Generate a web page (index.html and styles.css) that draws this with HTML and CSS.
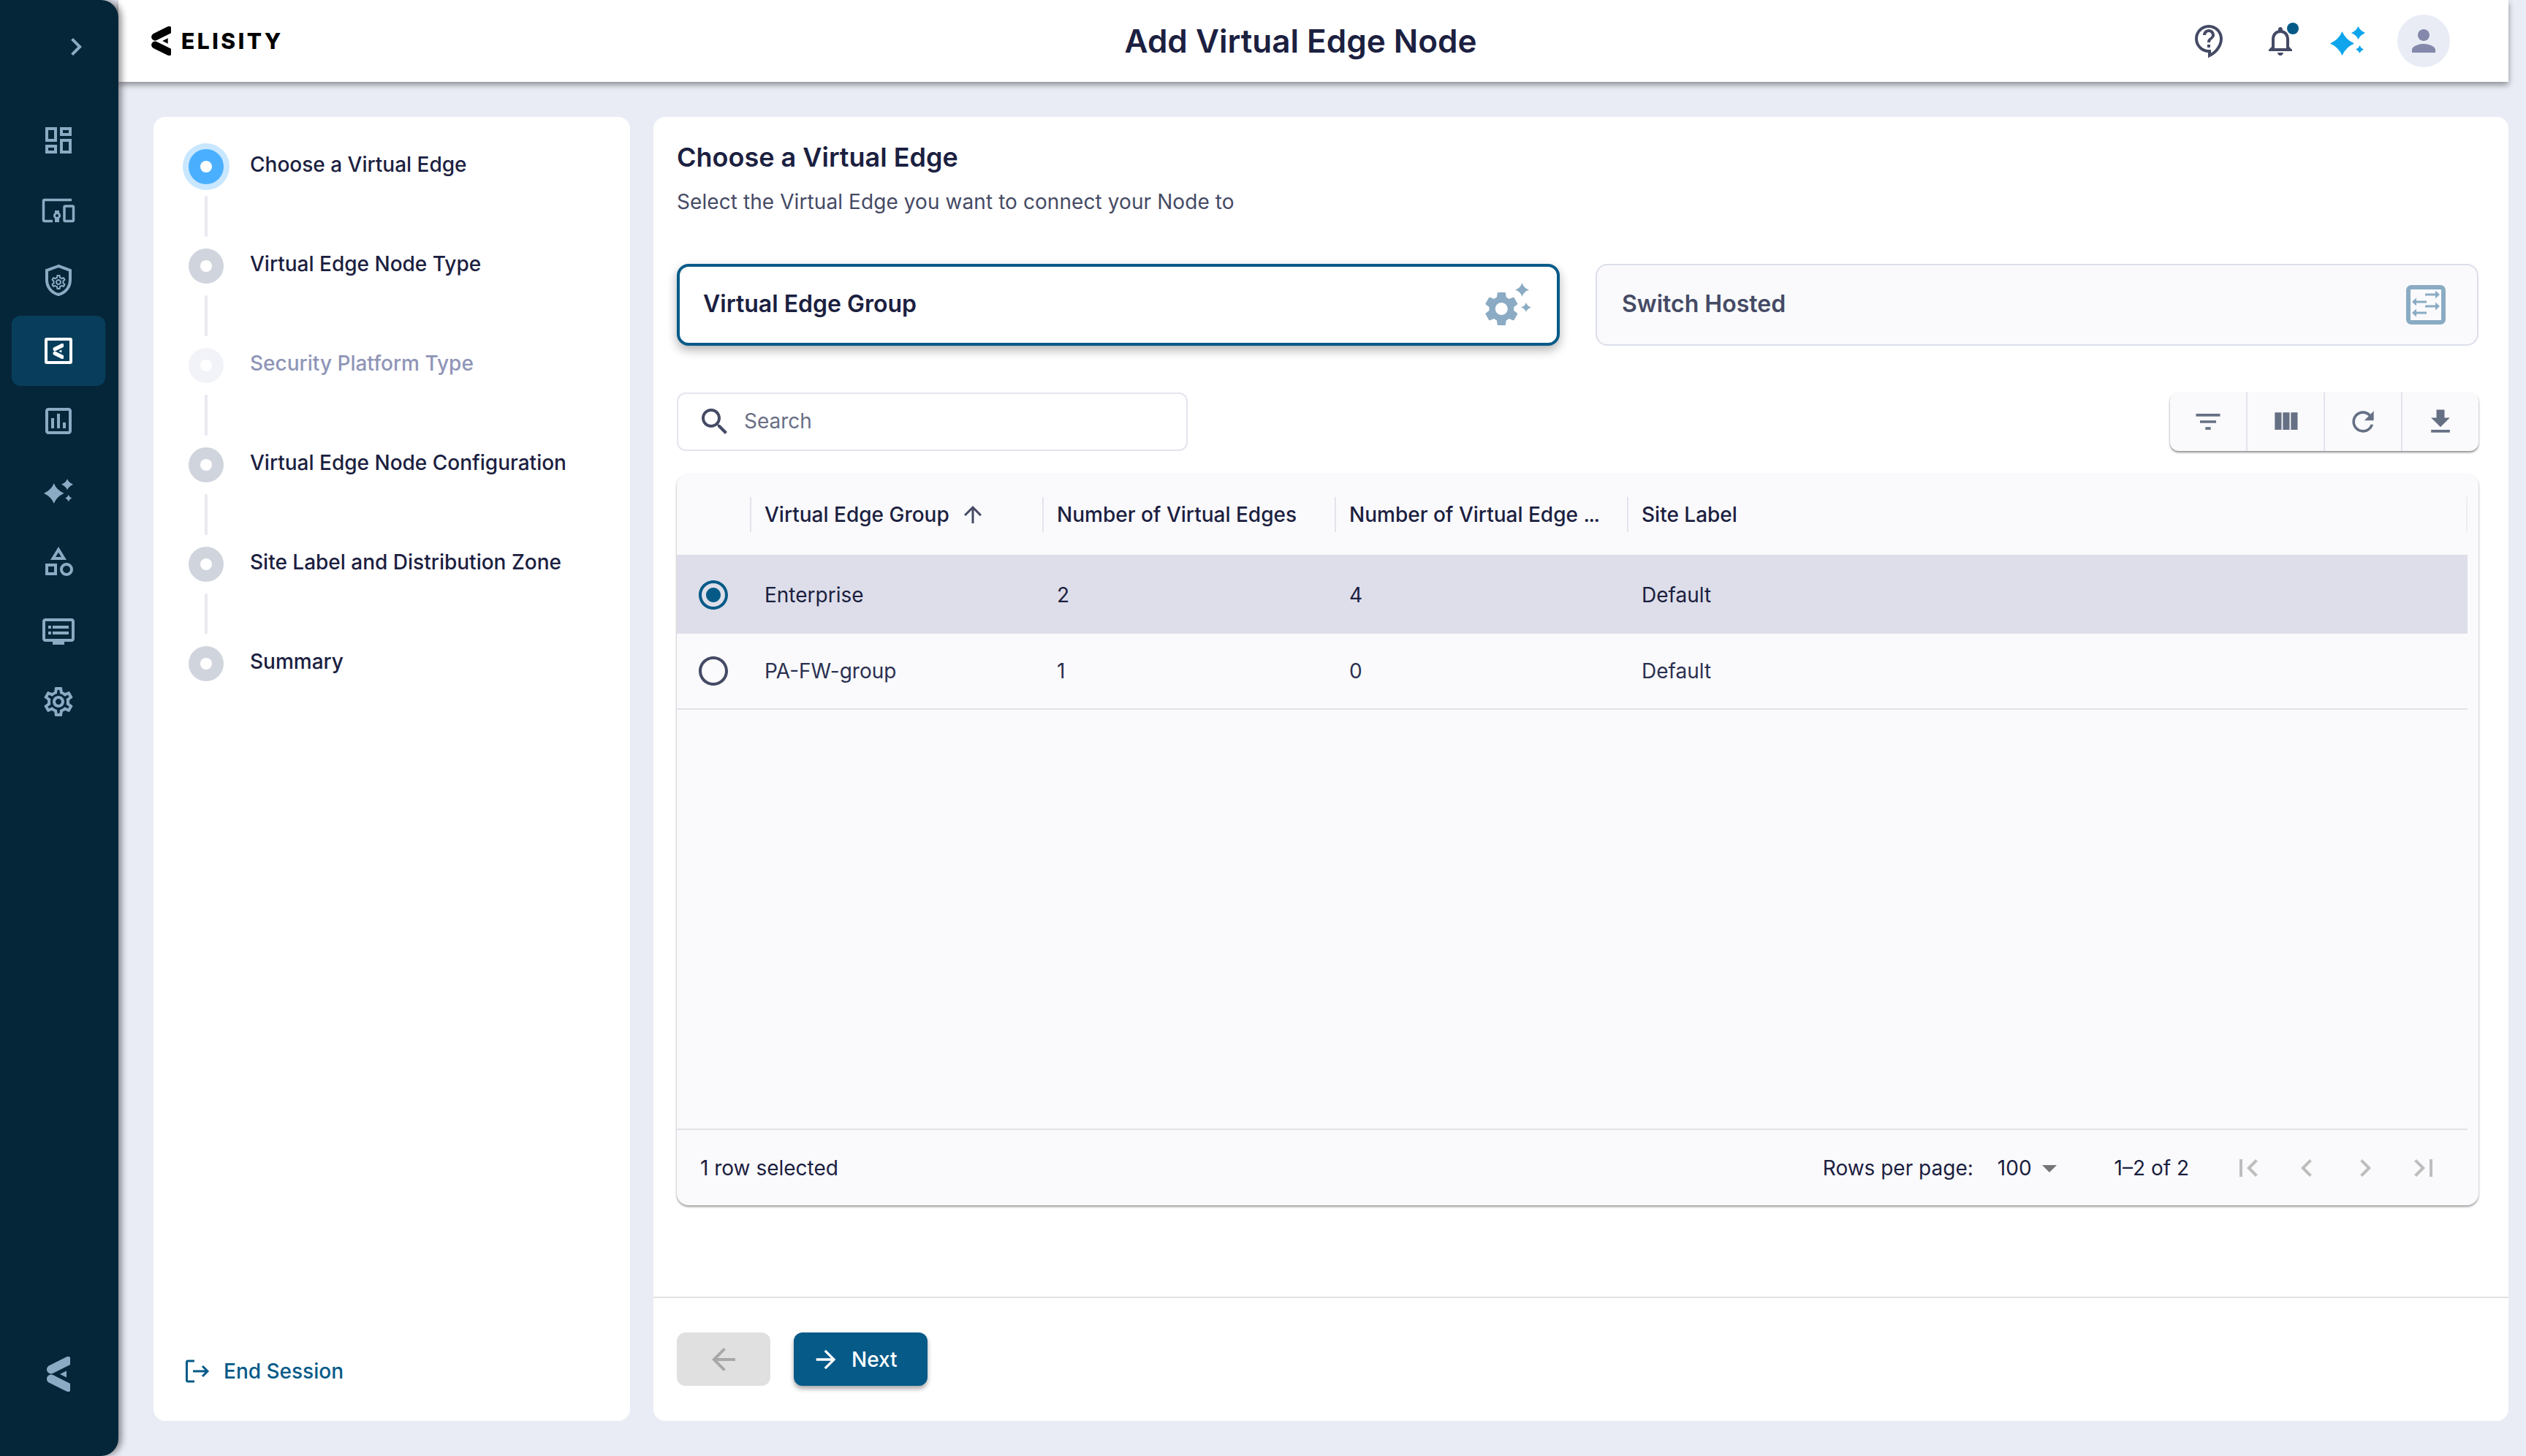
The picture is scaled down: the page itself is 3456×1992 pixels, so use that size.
FILE: index.html
```html
<!DOCTYPE html>
<html lang="en">

<head>
    <meta charset="UTF-8">
    <title>Add Virtual Edge Node</title>
    <link rel="stylesheet" href="styles.css">
</head>

<body>
    <svg class="sprite" width="0" height="0">
        <symbol id="sparkles" viewBox="0 0 48 40">
            <path d="M16.5 7Q21 18 33 23.5Q21 29 16.5 40Q12 29 0 23.5Q12 18 16.5 7Z" />
            <path d="M38.5 0Q41 6 48 9Q41 12 38.5 18Q36 12 29 9Q36 6 38.5 0Z" />
            <path d="M40.5 26Q42 30 46 31.5Q42 33 40.5 37Q39 33 35 31.5Q39 30 40.5 26Z" />
        </symbol>
        <symbol id="mark" viewBox="0 0 32 48">
            <path d="M29 6L6 17.500" fill="none" stroke="currentColor" stroke-width="12" stroke-linecap="round" />
            <path d="M6 30.500L29 42" fill="none" stroke="currentColor" stroke-width="12" stroke-linecap="round" />
            <path d="M18 24L27 19.500V28.500z" />
        </symbol>
    </svg>

    <div class="app">
        <aside class="sidebar">
            <div class="collapse">
                <svg class="icon-48" viewBox="0 0 24 24"><path d="M10 6L8.59 7.41 13.17 12l-4.58 4.59L10 18l6-6z" /></svg>
            </div>
            <nav class="nav">
                <a class="nav-item">
                    <svg class="icon-48" viewBox="0 0 24 24"><path d="M19 5v2h-4V5h4M9 5v6H5V5h4m10 8v6h-4v-6h4M9 17v2H5v-2h4M21 3h-8v6h8V3zM11 3H3v10h8V3zm10 8h-8v10h8V11zm-10 4H3v6h8v-6z" /></svg>
                </a>
                <a class="nav-item">
                    <svg class="icon-48" viewBox="0 0 48 48">
                        <path d="M42 9.500H5a1.500 1.500 0 0 0-1.500 1.500v26a1.500 1.500 0 0 0 1.500 1.500h11" fill="none" stroke="currentColor" stroke-width="3.500" />
                        <rect x="32" y="18" width="12.500" height="20.500" rx="1.500" fill="none" stroke="currentColor" stroke-width="3.500" />
                        <circle cx="22" cy="31" r="3.500" fill="none" stroke="currentColor" stroke-width="3" />
                        <path d="M19 24h6v3h-6zM19 35h6v5h-6z" />
                    </svg>
                </a>
                <a class="nav-item">
                    <svg class="icon-48" viewBox="0 0 48 48">
                        <path d="M24 4L8 10v13c0 10 7 18 16 20 9-2 16-10 16-20V10z" fill="none" stroke="currentColor" stroke-width="4" />
                        <g transform="translate(12 14)">
                            <path d="M19.43 12.98c.04-.32.07-.64.07-.98 0-.34-.03-.66-.07-.98l2.11-1.65c.19-.15.24-.42.12-.64l-2-3.46c-.09-.16-.26-.25-.44-.25-.06 0-.12.01-.17.03l-2.49 1c-.52-.4-1.08-.73-1.69-.98l-.38-2.65C14.46 2.18 14.25 2 14 2h-4c-.25 0-.46.18-.49.42l-.38 2.65c-.61.25-1.17.59-1.69.98l-2.49-1c-.06-.02-.12-.03-.18-.03-.17 0-.34.09-.43.25l-2 3.46c-.13.22-.07.49.12.64l2.11 1.65c-.04.32-.07.65-.07.98 0 .33.03.66.07.98l-2.11 1.65c-.19.15-.24.42-.12.64l2 3.46c.09.16.26.25.44.25.06 0 .12-.01.17-.03l2.49-1c.52.4 1.08.73 1.69.98l.38 2.65c.03.24.24.42.49.42h4c.25 0 .46-.18.49-.42l.38-2.65c.61-.25 1.17-.59 1.69-.98l2.49 1c.06.02.12.03.18.03.17 0 .34-.09.43-.25l2-3.46c.12-.22.07-.49-.12-.64l-2.11-1.65zm-1.98-1.71c.04.31.05.52.05.73 0 .21-.02.43-.05.73l-.14 1.13.89.7 1.08.84-.7 1.21-1.27-.51-1.04-.42-.9.68c-.43.32-.84.56-1.25.73l-1.06.43-.16 1.13-.2 1.35h-1.4l-.19-1.35-.16-1.13-1.06-.43c-.43-.18-.83-.41-1.23-.71l-.91-.7-1.06.43-1.27.51-.7-1.21 1.08-.84.89-.7-.14-1.13c-.03-.31-.05-.54-.05-.74s.02-.43.05-.73l.14-1.13-.89-.7-1.08-.84.7-1.21 1.27.51 1.04.42.9-.68c.43-.32.84-.56 1.25-.73l1.06-.43.16-1.13.2-1.35h1.39l.19 1.35.16 1.13 1.06.43c.43.18.83.41 1.23.71l.91.7 1.06-.43 1.27-.51.7 1.21-1.07.85-.89.7.14 1.13zM12 8c-2.21 0-4 1.79-4 4s1.79 4 4 4 4-1.79 4-4-1.79-4-4-4zm0 6c-1.1 0-2-.9-2-2s.9-2 2-2 2 .9 2 2-.9 2-2 2z" />
                        </g>
                    </svg>
                </a>
                <a class="nav-item active">
                    <svg class="icon-48" viewBox="0 0 48 48">
                        <rect x="7" y="8" width="34" height="32" rx="1" fill="none" stroke="currentColor" stroke-width="4" />
                        <use href="#mark" x="16" y="14" width="15" height="21" />
                    </svg>
                </a>
                <a class="nav-item">
                    <svg class="icon-48" viewBox="0 0 24 24"><path d="M19 3H5c-1.1 0-2 .9-2 2v14c0 1.1.9 2 2 2h14c1.1 0 2-.9 2-2V5c0-1.1-.9-2-2-2zm0 16H5V5h14v14zM7 10h2v7H7zm4-3h2v10h-2zm4 6h2v4h-2z" /></svg>
                </a>
                <a class="nav-item">
                    <svg class="spark-nav"><use href="#sparkles" /></svg>
                </a>
                <a class="nav-item">
                    <svg class="icon-48" viewBox="0 0 24 24"><path d="M12 2l-5.5 9h11L12 2zm0 3.84L13.93 9h-3.87L12 5.84zM17.5 13c-2.49 0-4.5 2.01-4.5 4.5s2.01 4.5 4.5 4.5 4.5-2.01 4.5-4.5-2.01-4.5-4.5-4.5zm0 7c-1.38 0-2.5-1.12-2.5-2.5s1.12-2.5 2.5-2.5 2.5 1.12 2.5 2.5-1.12 2.5-2.5 2.5zM3 21.5h8v-8H3v8zm2-6h4v4H5v-4z" /></svg>
                </a>
                <a class="nav-item">
                    <svg class="icon-48" viewBox="0 0 24 24"><path d="M21 3H3c-1.1 0-2 .9-2 2v12c0 1.1.9 2 2 2h5v2h8v-2h5c1.1 0 1.99-.9 1.99-2L23 5c0-1.1-.9-2-2-2zm0 14H3V5h18v12zM19 8H8v2h11V8zm0 4H8v2h11v-2zM7 8H5v2h2V8zm0 4H5v2h2v-2z" /></svg>
                </a>
                <a class="nav-item">
                    <svg class="icon-48" viewBox="0 0 24 24"><path d="M19.43 12.98c.04-.32.07-.64.07-.98 0-.34-.03-.66-.07-.98l2.11-1.65c.19-.15.24-.42.12-.64l-2-3.46c-.09-.16-.26-.25-.44-.25-.06 0-.12.01-.17.03l-2.49 1c-.52-.4-1.08-.73-1.69-.98l-.38-2.65C14.46 2.18 14.25 2 14 2h-4c-.25 0-.46.18-.49.42l-.38 2.65c-.61.25-1.17.59-1.69.98l-2.49-1c-.06-.02-.12-.03-.18-.03-.17 0-.34.09-.43.25l-2 3.46c-.13.22-.07.49.12.64l2.11 1.65c-.04.32-.07.65-.07.98 0 .33.03.66.07.98l-2.11 1.65c-.19.15-.24.42-.12.64l2 3.46c.09.16.26.25.44.25.06 0 .12-.01.17-.03l2.49-1c.52.4 1.08.73 1.69.98l.38 2.65c.03.24.24.42.49.42h4c.25 0 .46-.18.49-.42l.38-2.65c.61-.25 1.17-.59 1.69-.98l2.49 1c.06.02.12.03.18.03.17 0 .34-.09.43-.25l2-3.46c.12-.22.07-.49-.12-.64l-2.11-1.65zm-1.98-1.71c.04.31.05.52.05.73 0 .21-.02.43-.05.73l-.14 1.13.89.7 1.08.84-.7 1.21-1.27-.51-1.04-.42-.9.68c-.43.32-.84.56-1.25.73l-1.06.43-.16 1.13-.2 1.35h-1.4l-.19-1.35-.16-1.13-1.06-.43c-.43-.18-.83-.41-1.23-.71l-.91-.7-1.06.43-1.27.51-.7-1.21 1.08-.84.89-.7-.14-1.13c-.03-.31-.05-.54-.05-.74s.02-.43.05-.73l.14-1.13-.89-.7-1.08-.84.7-1.21 1.27.51 1.04.42.9-.68c.43-.32.84-.56 1.25-.73l1.06-.43.16-1.13.2-1.35h1.39l.19 1.35.16 1.13 1.06.43c.43.18.83.41 1.23.71l.91.7 1.06-.43 1.27-.51.7 1.21-1.07.85-.89.7.14 1.13zM12 8c-2.21 0-4 1.79-4 4s1.79 4 4 4 4-1.79 4-4-1.79-4-4-4zm0 6c-1.1 0-2-.9-2-2s.9-2 2-2 2 .9 2 2-.9 2-2 2z" /></svg>
                </a>
            </nav>
            <div class="sidebar-mark">
                <svg class="mark-large"><use href="#mark" /></svg>
            </div>
        </aside>

        <div class="content">
            <header class="topbar">
                <div class="logo">
                    <svg class="logo-mark"><use href="#mark" /></svg>
                    <span class="logo-text">ELISITY</span>
                </div>
                <h1 class="page-title">Add Virtual Edge Node</h1>
                <div class="top-icons">
                    <svg class="icon-48 help-icon" viewBox="0 0 24 24"><path d="M11 23.59v-3.6c-5.01-.26-9-4.42-9-9.49C2 5.26 6.26 1 11.5 1S21 5.26 21 10.5c0 4.95-3.44 9.93-8.57 12.4l-1.43.69zM11.5 3C7.36 3 4 6.36 4 10.5S7.36 18 11.5 18H13v2.3c3.64-2.3 6-6.08 6-9.8C19 6.36 15.64 3 11.5 3zm-1 11.5h2v2h-2zm2-1.5h-2c0-3.25 3-3 3-5 0-1.1-.9-2-2-2s-2 .9-2 2h-2c0-2.21 1.79-4 4-4s4 1.79 4 4c0 2.5-3 2.75-3 5z" /></svg>
                    <div class="bell">
                        <svg class="icon-48" viewBox="0 0 24 24"><path d="M12 22c1.1 0 2-.9 2-2h-4c0 1.1.9 2 2 2zm6-6v-5c0-3.07-1.63-5.64-4.5-6.32V4c0-.83-.67-1.5-1.5-1.5s-1.5.67-1.5 1.5v.68C7.64 5.36 6 7.92 6 11v5l-2 2v1h16v-1l-2-2zm-2 1H8v-6c0-2.48 1.51-4.5 4-4.5s4 2.02 4 4.5v6z" /></svg>
                        <span class="bell-dot"></span>
                    </div>
                    <svg class="spark-top"><use href="#sparkles" /></svg>
                    <div class="avatar">
                        <svg class="icon-48" viewBox="0 0 24 24"><path d="M12 12c2.21 0 4-1.79 4-4s-1.79-4-4-4-4 1.79-4 4 1.79 4 4 4zm0 2c-2.67 0-8 1.34-8 4v2h16v-2c0-2.66-5.33-4-8-4z" /></svg>
                    </div>
                </div>
            </header>

            <div class="panels">
                <section class="panel steps-panel">
                    <div class="steps">
                        <div class="step current"><span class="step-dot"></span><span class="step-label">Choose a Virtual Edge</span></div>
                        <div class="step-line"></div>
                        <div class="step"><span class="step-dot"></span><span class="step-label">Virtual Edge Node Type</span></div>
                        <div class="step-line"></div>
                        <div class="step disabled"><span class="step-dot"></span><span class="step-label">Security Platform Type</span></div>
                        <div class="step-line"></div>
                        <div class="step"><span class="step-dot"></span><span class="step-label">Virtual Edge Node Configuration</span></div>
                        <div class="step-line"></div>
                        <div class="step"><span class="step-dot"></span><span class="step-label">Site Label and Distribution Zone</span></div>
                        <div class="step-line"></div>
                        <div class="step"><span class="step-dot"></span><span class="step-label">Summary</span></div>
                    </div>
                    <a class="end-session">
                        <svg class="end-icon" viewBox="0 0 34 32">
                            <path d="M12 2H3a1.500 1.500 0 0 0-1.500 1.500v25A1.500 1.500 0 0 0 3 30h9" fill="none" stroke="currentColor" stroke-width="3" />
                            <path d="M10 16h20M23 9l7 7-7 7" fill="none" stroke="currentColor" stroke-width="3" />
                        </svg>
                        End Session
                    </a>
                </section>

                <section class="panel main-panel">
                    <div class="main-body">
                        <h2 class="main-title">Choose a Virtual Edge</h2>
                        <p class="main-sub">Select the Virtual Edge you want to connect your Node to</p>

                        <div class="cards">
                            <div class="card selected">
                                <span class="card-label">Virtual Edge Group</span>
                                <svg class="card-icon" viewBox="0 0 64 60">
                                    <g transform="translate(-5.900 7.300) scale(2.350)">
                                        <path d="M19.14 12.94c.04-.3.06-.61.06-.94 0-.32-.02-.64-.07-.94l2.03-1.58c.18-.14.23-.41.12-.61l-1.92-3.32c-.12-.22-.37-.29-.59-.22l-2.39.96c-.5-.38-1.03-.7-1.62-.94l-.36-2.54c-.04-.24-.24-.41-.48-.41h-3.84c-.24 0-.43.17-.47.41l-.36 2.54c-.59.24-1.13.57-1.62.94l-2.39-.96c-.22-.08-.47 0-.59.22L2.74 8.87c-.12.21-.08.47.12.61l2.03 1.58c-.05.3-.09.63-.09.94s.02.64.07.94l-2.03 1.58c-.18.14-.23.41-.12.61l1.92 3.32c.12.22.37.29.59.22l2.39-.96c.5.38 1.03.7 1.62.94l.36 2.54c.05.24.24.41.48.41h3.84c.24 0 .44-.17.47-.41l.36-2.54c.59-.24 1.13-.56 1.62-.94l2.39.96c.22.08.47 0 .59-.22l1.92-3.32c.12-.22.07-.47-.12-.61l-2.01-1.58zM12 15.6c-1.98 0-3.6-1.62-3.6-3.6s1.620-3.600 3.6-3.600 3.6 1.620 3.6 3.600-1.620 3.600-3.600 3.600z" />
                                    </g>
                                    <path d="M50.500 0Q52.500 7 60 9.500Q52.500 12 50.500 19Q48.500 12 41 9.500Q48.500 7 50.500 0Z" />
                                    <path d="M56 27Q57.500 32 63 33.500Q57.500 35 56 40Q54.500 35 49 33.500Q54.500 32 56 27Z" />
                                </svg>
                            </div>
                            <div class="card">
                                <span class="card-label">Switch Hosted</span>
                                <svg class="card-icon" viewBox="0 0 54 54">
                                    <rect x="3" y="3" width="48" height="48" rx="4" fill="none" stroke="currentColor" stroke-width="6" />
                                    <path d="M26 11.500h14v-4l6 5.500-6 5.500v-4H26zM28 21.500H14v-4l-6 5.500 6 5.500v-4h14zM26 27.500h14v-4l6 5.500-6 5.500v-4H26zM28 36.500H14v-4l-6 5.500 6 5.500v-4h14z" />
                                </svg>
                            </div>
                        </div>

                        <div class="toolbar-row">
                            <div class="search">
                                <svg class="icon-48" viewBox="0 0 24 24"><path d="M15.500 14h-.79l-.28-.27C15.410 12.590 16 11.110 16 9.500 16 5.910 13.090 3 9.500 3S3 5.910 3 9.500 5.910 16 9.500 16c1.610 0 3.090-.59 4.230-1.570l.27.28v.79l5 4.990L20.490 19l-4.990-5zm-6 0C7.010 14 5 11.990 5 9.500S7.010 5 9.500 5 14 7.010 14 9.500 11.990 14 9.500 14z" /></svg>
                                <span class="search-text">Search</span>
                            </div>
                            <div class="toolbar">
                                <button class="tool"><svg viewBox="0 0 24 24"><path d="M10 18h4v-2h-4v2zM3 6v2h18V6H3zm3 7h12v-2H6v2z" /></svg></button>
                                <button class="tool"><svg viewBox="0 0 24 24"><path d="M10 18h5V5h-5v13zm-6 0h5V5H4v13zM16 5v13h5V5h-5z" /></svg></button>
                                <button class="tool"><svg viewBox="0 0 24 24"><path d="M17.650 6.350C16.200 4.900 14.210 4 12 4c-4.420 0-7.990 3.580-7.990 8s3.570 8 7.990 8c3.730 0 6.840-2.550 7.730-6h-2.080c-.82 2.330-3.040 4-5.650 4-3.310 0-6-2.690-6-6s2.690-6 6-6c1.660 0 3.140.69 4.220 1.780L13 11h7V4l-2.350 2.350z" /></svg></button>
                                <button class="tool"><svg viewBox="0 0 24 24"><path d="M5 20h14v-2H5v2zM19 9h-4V3H9v6H5l7 7 7-7z" /></svg></button>
                            </div>
                        </div>

                        <div class="grid">
                            <div class="grid-head">
                                <div class="cell-check"></div>
                                <div class="cell head-cell">Virtual Edge Group
                                    <svg class="sort-icon" viewBox="0 0 24 24"><path d="M4 12l1.410 1.410L11 7.830V20h2V7.830l5.580 5.590L20 12l-8-8-8 8z" /></svg>
                                </div>
                                <div class="cell head-cell">Number of Virtual Edges</div>
                                <div class="cell head-cell">Number of Virtual Edge&nbsp;<span class="cut">...</span></div>
                                <div class="cell head-cell last">Site Label</div>
                            </div>
                            <div class="grid-row selected">
                                <div class="cell-check">
                                    <svg class="icon-48" viewBox="0 0 24 24"><path d="M12 7c-2.760 0-5 2.240-5 5s2.240 5 5 5 5-2.240 5-5-2.240-5-5-5zm0-5C6.480 2 2 6.480 2 12s4.480 10 10 10 10-4.480 10-10S17.520 2 12 2zm0 18c-4.420 0-8-3.580-8-8s3.580-8 8-8 8 3.580 8 8-3.580 8-8 8z" /></svg>
                                </div>
                                <div class="cell">Enterprise</div>
                                <div class="cell">2</div>
                                <div class="cell">4</div>
                                <div class="cell last">Default</div>
                            </div>
                            <div class="grid-row">
                                <div class="cell-check">
                                    <svg class="icon-48" viewBox="0 0 24 24"><path d="M12 2C6.480 2 2 6.480 2 12s4.480 10 10 10 10-4.480 10-10S17.520 2 12 2zm0 18c-4.420 0-8-3.580-8-8s3.580-8 8-8 8 3.580 8 8-3.580 8-8 8z" /></svg>
                                </div>
                                <div class="cell">PA-FW-group</div>
                                <div class="cell">1</div>
                                <div class="cell">0</div>
                                <div class="cell last">Default</div>
                            </div>
                            <div class="grid-foot">
                                <span class="row-count">1 row selected</span>
                                <span class="rows-label">Rows per page:</span>
                                <span class="rows-value">100</span>
                                <svg class="icon-48 rows-arrow" viewBox="0 0 24 24"><path d="M7 10l5 5 5-5z" /></svg>
                                <span class="range">1–2 of 2</span>
                                <div class="pager">
                                    <svg class="icon-48" viewBox="0 0 24 24"><path d="M18.410 16.590L13.820 12l4.590-4.590L17 6l-6 6 6 6zM6 6h2v12H6z" /></svg>
                                    <svg class="icon-48" viewBox="0 0 24 24"><path d="M15.410 7.410L14 6l-6 6 6 6 1.410-1.410L10.830 12z" /></svg>
                                    <svg class="icon-48" viewBox="0 0 24 24"><path d="M10 6L8.590 7.410 13.170 12l-4.580 4.590L10 18l6-6z" /></svg>
                                    <svg class="icon-48" viewBox="0 0 24 24"><path d="M5.590 7.410L10.180 12l-4.590 4.590L7 18l6-6-6-6zM16 6h2v12h-2z" /></svg>
                                </div>
                            </div>
                        </div>
                    </div>

                    <div class="actions">
                        <button class="btn-back">
                            <svg class="icon-48" viewBox="0 0 24 24"><path d="M20 11H7.830l5.590-5.590L12 4l-8 8 8 8 1.410-1.410L7.830 13H20v-2z" /></svg>
                        </button>
                        <button class="btn-next">
                            <svg viewBox="0 0 24 24"><path d="M12 4l-1.410 1.410L16.170 11H4v2h12.170l-5.580 5.590L12 20l8-8z" /></svg>
                            Next
                        </button>
                    </div>
                </section>
            </div>
        </div>
    </div>
</body>

</html>
```

FILE: styles.css
```css
* {
    box-sizing: border-box;
}

html,
body {
    margin: 0;
    height: 1992px;
    overflow: hidden;
}

body {
    font-family: Inter, "Liberation Sans", sans-serif;
    font-size: 28px;
    color: #1b2040;
    background-color: #e9ecf5;
}

svg {
    fill: currentColor;
    display: block;
    flex: none;
}

.sprite {
    position: absolute;
}

.icon-48 {
    width: 48px;
    height: 48px;
}

.app {
    display: flex;
    height: 1992px;
}

/* sidebar */
.sidebar {
    width: 162px;
    flex: none;
    display: flex;
    flex-direction: column;
    background-color: #052639;
    color: #8aabc3;
    border-radius: 0 24px 24px 0;
    box-shadow: 4px 0 10px rgba(0, 0, 0, 0.45);
    position: relative;
    z-index: 2;
}

.collapse {
    height: 128px;
    padding-left: 80px;
    display: flex;
    align-items: center;
}

.nav {
    margin-top: 16px;
    padding: 0 18px 0 16px;
}

.nav-item {
    height: 96px;
    display: flex;
    align-items: center;
    justify-content: center;
    border-radius: 12px;
}

.nav-item.active {
    background-color: #083e5b;
    color: #fff;
}

.spark-nav {
    width: 40px;
    height: 34px;
}

.sidebar-mark {
    margin-top: auto;
    height: 224px;
    padding-right: 2px;
    display: flex;
    align-items: center;
    justify-content: center;
}

.mark-large {
    width: 32px;
    height: 48px;
}

/* header */
.content {
    flex: 1;
    display: flex;
    flex-direction: column;
    min-width: 0;
}

.topbar {
    height: 112px;
    flex: none;
    margin-right: 24px;
    padding: 0 80px 0 45px;
    display: grid;
    grid-template-columns: 1fr auto 1fr;
    align-items: center;
    background-color: #fff;
    box-shadow: 0 4px 8px rgba(0, 0, 0, 0.4);
}

.logo {
    display: flex;
    align-items: center;
    gap: 14px;
    color: #000;
}

.logo-mark {
    width: 27px;
    height: 40px;
}

.logo-text {
    font-size: 30px;
    font-weight: 800;
    letter-spacing: 3.5px;
}

.page-title {
    margin: 0;
    font-size: 44px;
    font-weight: 600;
    line-height: 56px;
}

.top-icons {
    display: flex;
    align-items: center;
    justify-content: flex-end;
    gap: 44px;
    color: #454a65;
}

.help-icon {
    margin-right: 5px;
}

.bell {
    position: relative;
}

.bell-dot {
    position: absolute;
    top: -1px;
    right: -1px;
    width: 16px;
    height: 16px;
    border-radius: 50%;
    background-color: #065a88;
}

.spark-top {
    width: 48px;
    height: 40px;
    color: #0ea5ec;
}

.avatar {
    width: 72px;
    height: 72px;
    border-radius: 50%;
    display: flex;
    align-items: center;
    justify-content: center;
    background-color: #e9ecf5;
    color: #8489ab;
}

/* panels */
.panels {
    flex: 1;
    min-height: 0;
    display: flex;
    gap: 32px;
    padding: 48px 24px 48px 48px;
}

.panel {
    background-color: #fff;
    border-radius: 16px;
    display: flex;
    flex-direction: column;
}

.steps-panel {
    width: 652px;
    flex: none;
    padding: 44px 44px 48px;
}

.steps {
    padding-left: 4px;
}

.step {
    height: 48px;
    display: flex;
    align-items: center;
    gap: 36px;
    font-weight: 500;
}

.step-dot {
    width: 48px;
    height: 48px;
    flex: none;
    border-radius: 50%;
    background-color: #d0d4dd;
    display: flex;
    align-items: center;
    justify-content: center;
}

.step-dot::after {
    content: '';
    width: 16px;
    height: 16px;
    border-radius: 50%;
    background-color: #fff;
}

.step-label {
    padding-bottom: 6px;
}

.step.current .step-dot {
    background-color: #4aafff;
    box-shadow: 0 0 0 8px #c9e7ff;
}

.step.disabled .step-dot {
    background-color: #f2f3f8;
}

.step.disabled .step-label {
    color: #8f95b7;
}

.step-line {
    width: 4px;
    height: 56px;
    margin: 16px 0 16px 22px;
    border-radius: 2px;
    background-color: #e8e9f1;
}

.end-session {
    margin-top: auto;
    height: 40px;
    display: flex;
    align-items: center;
    gap: 18px;
    color: #065a88;
    font-weight: 500;
}

.end-icon {
    width: 34px;
    height: 32px;
}

/* main panel */
.main-panel {
    flex: 1;
    min-width: 0;
}

.main-body {
    padding: 33px 41px 0 32px;
}

.main-title {
    margin: 0;
    font-size: 36px;
    font-weight: 600;
    line-height: 44px;
}

.main-sub {
    margin: 19px 0 0;
    line-height: 40px;
    letter-spacing: 0.08px;
    color: #454a65;
}

.cards {
    margin-top: 65px;
    display: grid;
    grid-template-columns: 1fr 1fr;
    gap: 49px;
}

.card {
    height: 112px;
    padding: 0 43px 0 34px;
    display: flex;
    align-items: center;
    justify-content: space-between;
    font-size: 32px;
    font-weight: 600;
    color: #454a65;
    background-color: #fafafc;
    border: 2px solid #dcdfea;
    border-radius: 16px;
}

.card-label {
    padding-bottom: 3px;
}

.card.selected {
    padding: 0 34px 0 32px;
    color: #1b2040;
    background-color: #fff;
    border: 4px solid #065a88;
    box-shadow: 0 6px 14px rgba(0, 0, 0, 0.3);
}

.card-icon {
    color: #8aabc3;
    width: 54px;
    height: 54px;
}

.card.selected .card-icon {
    width: 64px;
    height: 60px;
}

.toolbar-row {
    margin-top: 64px;
    display: flex;
    justify-content: space-between;
}

.search {
    width: 699px;
    height: 80px;
    padding-left: 26px;
    display: flex;
    align-items: center;
    gap: 16px;
    color: #6a6f86;
    border: 2px solid #e3e5ef;
    border-radius: 12px;
}

.search svg {
    color: #454a65;
}

.search-text {
    padding-bottom: 2px;
}

.toolbar {
    width: 422px;
    height: 80px;
    display: flex;
    background-color: #fafafc;
    border-radius: 12px;
    box-shadow: 0 2px 3px rgba(0, 0, 0, 0.45);
    overflow: hidden;
}

.tool {
    flex: 1;
    display: flex;
    align-items: center;
    justify-content: center;
    padding: 0;
    border: none;
    border-left: 2px solid #e3e3ec;
    background: none;
    color: #667085;
}

.tool:first-child {
    border-left: none;
}

.tool svg {
    width: 44px;
    height: 44px;
}

/* data grid */
.grid {
    margin-top: 31px;
    height: 1001px;
    padding-right: 15px;
    display: flex;
    flex-direction: column;
    background-color: #fafafc;
    border-radius: 16px;
    box-shadow: 0 2px 3px rgba(0, 0, 0, 0.4);
}

.grid-head,
.grid-row {
    display: flex;
    align-items: center;
    flex: none;
}

.grid-head {
    height: 111px;
    font-weight: 500;
}

.grid-row {
    height: 108px;
    color: #2b3050;
}

.grid-row.selected {
    padding-top: 2px;
    background-color: #dddee9;
    color: #1b2040;
}

.grid-row:not(.selected) {
    height: 104px;
    border-bottom: 2px solid #e2e3e8;
}

.cell-check {
    width: 100px;
    flex: none;
    display: flex;
    justify-content: center;
    color: #454a65;
}

.selected .cell-check {
    color: #065a88;
}

.cell {
    width: 400px;
    flex: none;
    padding-left: 20px;
    display: flex;
    align-items: center;
    height: 48px;
    white-space: nowrap;
}

.cell.last {
    width: auto;
    flex: 1;
}

.head-cell {
    border-left: 2px solid #e3e3ec;
    padding-left: 18px;
}

.head-cell.last {
    border-right: 2px solid #eeeef3;
}

.cut {
    letter-spacing: -1.5px;
}

.sort-icon {
    width: 36px;
    height: 36px;
    margin-left: 14px;
    color: #454a65;
}

.grid-foot {
    margin-top: auto;
    height: 105px;
    padding-left: 32px;
    display: flex;
    align-items: center;
    border-top: 2px solid #e2e3e8;
}

.row-count {
    margin-right: auto;
}

.rows-label {
    margin-right: 33px;
}

.rows-arrow {
    color: #757575;
    margin-right: 65px;
}

.pager {
    margin-left: 57px;
    margin-right: 36px;
    display: flex;
    gap: 32px;
    color: #bdbdbd;
}

/* bottom actions */
.actions {
    margin-top: auto;
    height: 170px;
    padding: 47px 32px 0;
    display: flex;
    gap: 32px;
    border-top: 2px solid #e2e2e2;
}

.btn-back,
.btn-next {
    height: 73px;
    border: none;
    border-radius: 12px;
    display: flex;
    align-items: center;
    font-family: inherit;
    font-size: 28px;
    font-weight: 500;
}

.btn-back {
    width: 128px;
    justify-content: center;
    background-color: #e0e0e0;
    color: #a8a8a8;
}

.btn-next {
    width: 183px;
    padding: 0 0 0 24px;
    gap: 15px;
    background-color: #065a88;
    color: #fff;
    box-shadow: 0 4px 6px rgba(0, 0, 0, 0.35);
}

.btn-next svg {
    width: 40px;
    height: 40px;
}
```
